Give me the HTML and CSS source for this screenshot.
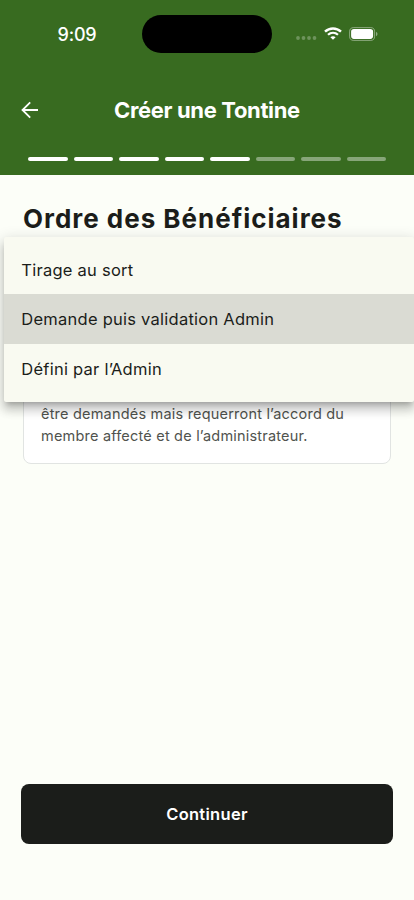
FILE: index.html
```html
<!DOCTYPE html>
<html lang="fr">
<head>
<meta charset="utf-8">
<meta name="viewport" content="width=device-width, initial-scale=1">
<title>Créer une Tontine</title>
<link rel="stylesheet" href="styles.css">
</head>
<body>
<div class="screen">
  <header class="header">
    <div class="status">
      <span class="time">9:09</span>
      <div class="island"></div>
      <div class="indicators">
        <svg class="dots" width="21" height="4" viewBox="0 0 21 4"><g fill="#fff" fill-opacity=".27"><circle cx="2" cy="2" r="1.9"/><circle cx="7.5" cy="2" r="1.9"/><circle cx="13" cy="2" r="1.9"/><circle cx="18.5" cy="2" r="1.9"/></g></svg>
        <svg class="wifi" width="18" height="13" viewBox="0 0 18 13" fill="none" stroke="#fff"><path d="M1 4.7C5.5.4 12.5.4 17 4.7" stroke-width="2.4"/><path d="M4 7.8c2.9-2.7 7.1-2.7 10 0" stroke-width="2.2"/><path d="M9 12.8 6.4 10.2c1.5-1.3 3.7-1.3 5.2 0Z" fill="#fff" stroke="none"/></svg>
        <svg class="battery" width="29" height="14" viewBox="0 0 29 14"><rect x=".6" y=".6" width="25" height="12.8" rx="4.1" fill="none" stroke="#fff" stroke-opacity=".42"/><rect x="2.1" y="2.1" width="22" height="9.8" rx="2.8" fill="#fff"/><path d="M27.1 4.8c1.8.7 1.8 3.7 0 4.4Z" fill="#fff" fill-opacity=".5"/></svg>
      </div>
    </div>
    <div class="appbar">
      <svg class="back" width="18" height="18" viewBox="0 0 18 18" fill="none" stroke="#fff" stroke-width="1.8"><path d="M17 9H1.8M9.2 1.3 1.5 9l7.7 7.7"/></svg>
      <h1 class="title">Créer une Tontine</h1>
    </div>
    <div class="progress">
      <i class="on"></i><i class="on"></i><i class="on"></i><i class="on"></i><i class="on"></i><i></i><i></i><i></i>
    </div>
  </header>
  <main class="content">
    <h2 class="heading">Ordre des Bénéficiaires</h2>
    <div class="card">
      <p>être demandés mais requerront l’accord du<br>membre affecté et de l’administrateur.</p>
    </div>
    <ul class="menu">
      <li>Tirage au sort</li>
      <li class="selected">Demande puis validation Admin</li>
      <li>Défini par l’Admin</li>
    </ul>
  </main>
  <footer class="footer"><button class="cta">Continuer</button></footer>
</div>
</body>
</html>
```
FILE: styles.css
```css
* { box-sizing: border-box; }
body { margin: 0; font-family: Inter, "Liberation Sans", sans-serif; background: #fcfef8; color: #1b1d1a; }
h1, h2, p, ul { margin: 0; padding: 0; }
svg { display: block; flex: none; }
.screen { display: flex; flex-direction: column; width: 414px; height: 900px; overflow: hidden; }
.header { height: 175.3px; flex: none; background: #386b20; color: #fff; }
.status { display: grid; grid-template-columns: 142px 130px 142px; height: 67px; align-items: start; }
.time { padding: 23.5px 0 0 57.5px; font-size: 18px; line-height: 22px; font-weight: 500; letter-spacing: -.2px; }
.island { height: 38px; margin-top: 14.5px; border-radius: 19px; background: #000; }
.indicators { display: flex; align-items: center; padding: 26.7px 0 0 24px; }
.dots { margin: 9px 6.5px 0 0; }
.wifi { margin-right: 7.5px; }
.appbar { display: grid; grid-template-columns: 114px 1fr; align-items: center; height: 85px; }
.back { margin-left: 20.5px; }
.title { font-size: 22px; line-height: 30px; font-weight: 700; letter-spacing: -.35px; white-space: nowrap; }
.progress { display: flex; gap: 6px; padding: 4.5px 28px 0; }
.progress i { flex: 1; height: 4.5px; border-radius: 2.2px; background: #87a679; }
.progress .on { background: #fff; }
.content { position: relative; flex: 1; padding: 28px 23px 0; }
.heading { font-size: 26px; line-height: 32px; font-weight: 700; letter-spacing: .98px; white-space: nowrap; }
.card { height: 203.3px; margin-top: 25.3px; border: 1px solid #e1e4e2; border-radius: 8px; background: #fff; display: flex; align-items: flex-end; padding: 0 17px 16px; }
.card p { font-size: 14.5px; line-height: 22px; color: #50534e; letter-spacing: .2px; white-space: nowrap; }
.menu { position: absolute; left: 4.3px; top: 61.5px; width: 409.5px; height: 165px; padding: 8px 0; list-style: none; background: #f9faf1; border-radius: 2px; box-shadow: 0 5px 5px -3px rgba(0,0,0,.2), 0 8px 10px 1px rgba(0,0,0,.14), 0 3px 14px 2px rgba(0,0,0,.12); }
.menu li { height: 49.5px; display: flex; align-items: center; padding-left: 17px; font-size: 16.5px; letter-spacing: .25px; white-space: nowrap; }
.menu .selected { background: #dadbd3; }
.footer { flex: none; padding: 0 21px 56px; }
.cta { display: block; width: 100%; height: 59.7px; border: 0; border-radius: 8px; background: #1b1d1a; color: #fff; font: 600 16.5px Inter, sans-serif; letter-spacing: .3px; }
```
